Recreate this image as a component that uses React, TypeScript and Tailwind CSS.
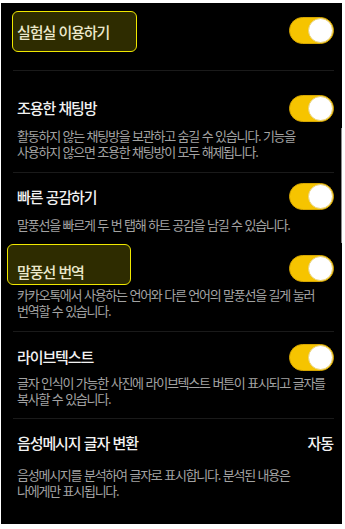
const font = { fontFamily: '"Noto Sans CJK KR", "Noto Sans", sans-serif' };

const Toggle = ({ className = "" }: { className?: string }) => (
  <div
    className={`flex h-[27px] w-[45px] shrink-0 items-center justify-end rounded-full border border-[#d6a600] bg-[#f6c400] ${className}`}>
    <div className="h-[25px] w-[25px] rounded-full border border-[#e9d27a] bg-white" />
  </div>
);

const Title = ({ children }: { children: React.ReactNode }) => (
  <span className="text-[15px] leading-[20px] font-medium tracking-[-1.1px] [word-spacing:1px] text-[#f2f2f2]">
    {children}
  </span>
);

const Desc = ({
  lines,
  className = "",
}: {
  lines: string[];
  className?: string;
}) => (
  <p
    className={`pl-[16px] text-[13px] leading-[16px] tracking-[-1.25px] [word-spacing:1px] whitespace-nowrap text-[#a3a3a3] ${className}`}>
    {lines.map((l, i) => (
      <span key={i} className="block">
        {l}
      </span>
    ))}
  </p>
);

const Divider = ({ className = "" }: { className?: string }) => (
  <div className={`mr-[8px] ml-[12px] h-px bg-[#1a1a1a] ${className}`} />
);

export default function App() {
  return (
    <div className="min-h-[529px] bg-white pt-[3px] pl-[1px]" style={font}>
      <div className="relative h-[521px] w-[341px] overflow-hidden bg-black">
        {/* scroll indicator */}
        <div className="absolute top-[125px] right-0 h-[115px] w-px bg-[#8a8a8a]" />

        {/* 실험실 이용하기 */}
        <div className="mt-[8px] flex h-[41px] items-center justify-between pr-[8px] pl-[11px]">
          <div className="flex h-[41px] w-[125px] items-center rounded-[6px] border border-[#f0e800] bg-[#2e2c00] pl-[4px]">
            <span className="text-[15px] leading-[20px] font-medium tracking-[-1.1px] [word-spacing:1px] text-[#ebe8cc]">
              실험실 이용하기
            </span>
          </div>
          <Toggle className="-mt-[2px]" />
        </div>

        <Divider className="mt-[18px]" />

        {/* 조용한 채팅방 */}
        <div className="mt-[24px] flex h-[27px] items-center justify-between pr-[8px] pl-[16px]">
          <div className="-mt-[3px]">
            <Title>조용한 채팅방</Title>
          </div>
          <Toggle />
        </div>
        <Desc
          className="mt-[6px]"
          lines={[
            "활동하지 않는 채팅방을 보관하고 숨길 수 있습니다. 기능을",
            "사용하지 않으면 조용한 채팅방이 모두 해제됩니다.",
          ]}
        />

        <Divider className="mt-[12px]" />

        {/* 빠른 공감하기 */}
        <div className="mt-[10px] flex h-[27px] items-center justify-between pr-[8px] pl-[16px]">
          <Title>빠른 공감하기</Title>
          <Toggle />
        </div>
        <Desc
          className="mt-[7px]"
          lines={["말풍선을 빠르게 두 번 탭해 하트 공감을 남길 수 있습니다."]}
        />

        {/* 말풍선 번역 */}
        <div className="mt-[11px] flex h-[41px] justify-between pr-[8px] pl-[6px]">
          <div className="h-[41px] w-[124px] rounded-[6px] border border-[#f0e800] bg-[#2e2c00] pt-[14px] pl-[9px]">
            <span className="text-[15px] leading-[20px] font-medium tracking-[-1.1px] [word-spacing:1px] text-[#ebe8cc]">
              말풍선 번역
            </span>
          </div>
          <Toggle className="mt-[11px]" />
        </div>
        <Desc
          className="mt-[2px]"
          lines={[
            "카카오톡에서 사용하는 언어와 다른 언어의 말풍선을 길게 눌러",
            "번역할 수 있습니다.",
          ]}
        />

        <Divider className="mt-[12px]" />

        {/* 라이브텍스트 */}
        <div className="mt-[11px] flex h-[28px] items-center justify-between pr-[8px] pl-[16px]">
          <div className="-mt-[3px]">
            <Title>라이브텍스트</Title>
          </div>
          <Toggle />
        </div>
        <Desc
          className="mt-[4px]"
          lines={[
            "글자 인식이 가능한 사진에 라이브텍스트 버튼이 표시되고 글자를",
            "복사할 수 있습니다.",
          ]}
        />

        <Divider className="mt-[11px]" />

        {/* 음성메시지 글자 변환 */}
        <div className="mt-[14px] flex h-[20px] items-center justify-between pr-[9px] pl-[16px]">
          <Title>음성메시지 글자 변환</Title>
          <span className="text-[15px] leading-[20px] font-medium tracking-[-1.1px] text-[#f2f2f2]">
            자동
          </span>
        </div>
        <Desc
          className="mt-[14px]"
          lines={[
            "음성메시지를 분석하여 글자로 표시합니다. 분석된 내용은",
            "나에게만 표시됩니다.",
          ]}
        />
      </div>
    </div>
  );
}
